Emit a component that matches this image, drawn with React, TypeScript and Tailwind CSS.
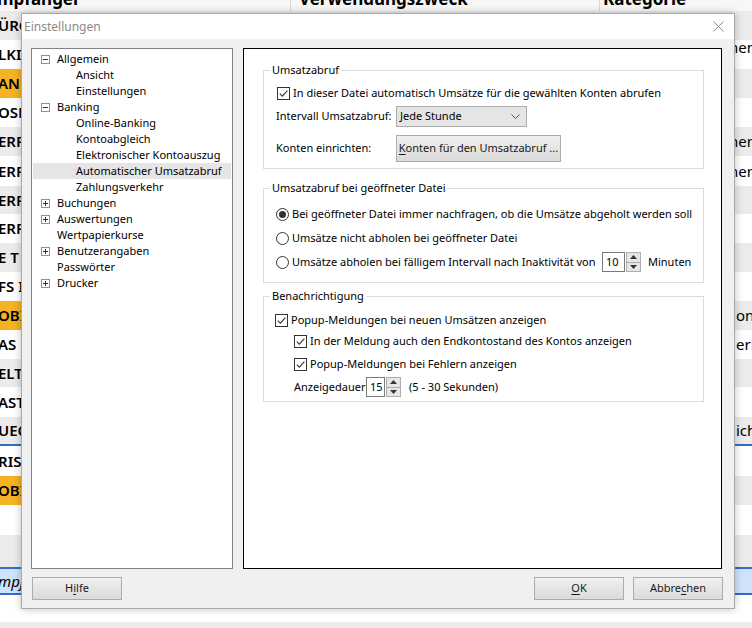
import React from "react";

const FONT = { fontFamily: '"Noto Sans", "Open Sans", sans-serif' };

type Row = { h: number; gray: boolean; orange?: boolean; left: string; right?: string; rightMl?: string; bottom?: string; rightShift?: string };

const rows: Row[] = [
  { h: 29, gray: true, left: "ÜRC" },
  { h: 29, gray: false, left: "LKI", right: "hen", rightMl: "ml-[0px]", rightShift: "mb-[14px]" },
  { h: 29, gray: true, orange: true, left: "AND" },
  { h: 29, gray: false, left: "OSM" },
  { h: 29, gray: true, left: "ERF", right: "hen", rightMl: "ml-[0px]" },
  { h: 30, gray: false, left: "ERF", right: "hen", rightMl: "ml-[0px]" },
  { h: 28, gray: true, left: "ERF" },
  { h: 29, gray: false, left: "ERF" },
  { h: 29, gray: true, left: "E T" },
  { h: 29, gray: false, left: "FS I" },
  { h: 29, gray: true, orange: true, left: "OBI", right: "on", rightMl: "ml-[7px]" },
  { h: 29, gray: false, left: "AS", right: "erl", rightMl: "ml-[7px]" },
  { h: 28, gray: true, left: "ELT" },
  { h: 30, gray: false, left: "AST" },
  { h: 29, gray: true, left: "UEC", right: "ich", rightMl: "ml-[7px]", bottom: "border-b-2 border-[#2f6fc4]" },
  { h: 30, gray: false, left: "RISI" },
  { h: 29, gray: true, orange: true, left: "OBI" },
  { h: 30, gray: false, left: "" },
  { h: 32, gray: true, left: "" },
];

function Check() {
  return (
    <span className="inline-flex w-[13px] h-[13px] border border-[#333333] bg-white items-center justify-center shrink-0">
      <svg width="11" height="11" viewBox="0 0 11 11">
        <path d="M1.8 5.6 L4.3 8.1 L9.4 2.6" fill="none" stroke="#333333" strokeWidth="1.1" />
      </svg>
    </span>
  );
}

function Radio({ on }: { on?: boolean }) {
  return (
    <span className="inline-flex w-[13px] h-[13px] rounded-full border border-[#333333] bg-white items-center justify-center shrink-0">
      {on ? <span className="w-[7px] h-[7px] rounded-full bg-[#333333]" /> : null}
    </span>
  );
}

function Spin({ value, w }: { value: string; w: string }) {
  return (
    <span className="inline-flex items-stretch h-[20px] shrink-0">
      <span className={`${w} border border-[#7a7a7a] bg-white flex items-center pl-[3px]`}>{value}</span>
      <span className="ml-[1px] w-[15px] border border-[#adadad] bg-[#e6e6e6] flex flex-col">
        <span className="flex-1 flex items-center justify-center border-b border-[#adadad]">
          <svg width="7" height="4" viewBox="0 0 7 4"><path d="M0 4 L3.5 0 L7 4 Z" fill="#333" /></svg>
        </span>
        <span className="flex-1 flex items-center justify-center">
          <svg width="7" height="4" viewBox="0 0 7 4"><path d="M0 0 L3.5 4 L7 0 Z" fill="#333" /></svg>
        </span>
      </span>
    </span>
  );
}

function Btn({ children, w = "w-[90px]", h = "h-[23px]" }: { children: React.ReactNode; w?: string; h?: string }) {
  return (
    <div
      className={`${w} ${h} shrink-0 border border-[#acacac] bg-gradient-to-b from-[#f0f0f0] to-[#dadada] flex items-center justify-center text-[11px] text-[#1a1a1a] whitespace-nowrap`}
    >
      {children}
    </div>
  );
}

function Box({ plus }: { plus?: boolean }) {
  return (
    <span className="w-[9px] h-[9px] border border-[#919191] bg-white shrink-0 flex items-center justify-center">
      <svg width="7" height="7" viewBox="0 0 7 7">
        <path d="M1 3.5 H6" stroke="#333" strokeWidth="1" />
        {plus ? <path d="M3.5 1 V6" stroke="#333" strokeWidth="1" /> : null}
      </svg>
    </span>
  );
}

type TreeItem = { label: string; level: 0 | 1; box?: "plus" | "minus"; sel?: boolean };
const tree: TreeItem[] = [
  { label: "Allgemein", level: 0, box: "minus" },
  { label: "Ansicht", level: 1 },
  { label: "Einstellungen", level: 1 },
  { label: "Banking", level: 0, box: "minus" },
  { label: "Online-Banking", level: 1 },
  { label: "Kontoabgleich", level: 1 },
  { label: "Elektronischer Kontoauszug", level: 1 },
  { label: "Automatischer Umsatzabruf", level: 1, sel: true },
  { label: "Zahlungsverkehr", level: 1 },
  { label: "Buchungen", level: 0, box: "plus" },
  { label: "Auswertungen", level: 0, box: "plus" },
  { label: "Wertpapierkurse", level: 0 },
  { label: "Benutzerangaben", level: 0, box: "plus" },
  { label: "Passwörter", level: 0 },
  { label: "Drucker", level: 0, box: "plus" },
];

export default function App() {
  return (
    <div className="relative w-[752px] h-[628px] overflow-hidden bg-white text-black" style={FONT}>
      {/* background table */}
      <div className="flex flex-col">
        <div className="h-[11px] overflow-hidden flex bg-[#f7f7f7]">
          <div className="w-[291px] border-r border-[#d6d6d6] overflow-hidden">
            <div className="mt-[-11px] ml-[-3px] text-[17px] font-bold leading-[20px] whitespace-nowrap">mpfänger</div>
          </div>
          <div className="w-[309px] border-r border-[#d6d6d6] overflow-hidden">
            <div className="mt-[-11px] ml-[8px] text-[17px] font-bold leading-[20px] whitespace-nowrap">Verwendungszweck</div>
          </div>
          <div className="flex-1 overflow-hidden">
            <div className="mt-[-11px] ml-[3px] text-[17px] font-bold leading-[20px] whitespace-nowrap">Kategorie</div>
          </div>
        </div>
        {rows.map((r, i) => (
          <div
            key={i}
            className={`flex items-stretch overflow-hidden ${r.gray ? "bg-[#ebebeb]" : "bg-white"} ${r.bottom ?? ""}`}
            style={{ height: r.h }}
          >
            <div className={`w-[291px] shrink-0 overflow-hidden flex items-center ${r.orange ? "bg-[#f5b324]" : ""}`}>
              <div className="ml-[-2px] text-[15px] font-semibold whitespace-nowrap">{r.left}</div>
            </div>
            <div className="w-[438px] shrink-0" />
            <div className="flex items-center">
              <div className={`${r.rightMl ?? ""} ${r.rightShift ?? ""} text-[15px] whitespace-nowrap`}>{r.right ?? ""}</div>
            </div>
          </div>
        ))}
        <div className="h-[28px] flex items-center bg-[#cfe3fb] border-y-2 border-[#2f6fc4]">
          <div className="ml-[-2px] text-[15px] italic whitespace-nowrap">mpj</div>
        </div>
      </div>
      <div className="absolute left-0 right-0 bottom-0 h-[6px] bg-[#ececec]" />

      {/* dialog window */}
      <div className="absolute left-[21px] top-[13px] w-[714px] h-[596px] border border-[#aaaaaa] bg-[#f0f0f0] flex flex-col shadow-[0_0_8px_rgba(0,0,0,0.25)] text-[11px] whitespace-nowrap">
        <div className="h-[25px] bg-white flex items-center justify-between pl-[2px] pr-[10px]">
          <span className="text-[12px] text-[#8a8a8a]">Einstellungen</span>
          <svg width="11" height="11" viewBox="0 0 11 11">
            <path d="M0.5 0.5 L10.5 10.5 M10.5 0.5 L0.5 10.5" stroke="#8a8a8a" strokeWidth="1" />
          </svg>
        </div>
        <div className="flex pl-[9px] pr-[12px] pt-[9px] gap-[10px]">
          {/* tree */}
          <div className="w-[202px] h-[521px] border border-[#828282] bg-white pt-[2px]">
            {tree.map((t, i) => (
              <div
                key={i}
                className={`h-[16px] flex items-center mx-[1px] ${t.sel ? "bg-[#e5e5e5]" : ""} ${
                  t.level === 1 ? "pl-[43px]" : t.box ? "pl-[8px]" : "pl-[24px]"
                }`}
              >
                {t.box ? <Box plus={t.box === "plus"} /> : null}
                <span className={t.box ? "ml-[7px]" : ""}>{t.label}</span>
              </div>
            ))}
          </div>
          {/* right panel */}
          <div className="w-[479px] h-[521px] border border-black bg-white pl-[19px] pt-[21px]">
            {/* group 1 */}
            <div className="relative w-[441px] h-[99px] border border-[#dcdcdc] pl-[12px] pt-[14px]">
              <span className="absolute left-[6px] top-[-9px] bg-white px-[2px] leading-[16px]">Umsatzabruf</span>
              <div className="h-[16px] flex items-center">
                <span className="ml-[1px] flex"><Check /></span>
                <span className="ml-[3px]">In dieser Datei automatisch Umsätze für die gewählten Konten abrufen</span>
              </div>
              <div className="mt-[5px] h-[21px] flex items-center">
                <span className="w-[120px]">Intervall Umsatzabruf:</span>
                <div className="w-[131px] h-[21px] border border-[#acacac] bg-[#e5e5e5] flex items-center justify-between pl-[3px] pr-[6px]">
                  <span>Jede Stunde</span>
                  <svg width="9" height="5" viewBox="0 0 9 5">
                    <path d="M0.5 0.5 L4.5 4.5 L8.5 0.5" fill="none" stroke="#555" strokeWidth="1" />
                  </svg>
                </div>
              </div>
              <div className="mt-[8px] h-[27px] flex items-center">
                <span className="w-[120px]">Konten einrichten:</span>
                <Btn w="w-[165px]" h="h-[27px]">
                  <span>
                    <span className="underline underline-offset-2">K</span>onten für den Umsatzabruf ...
                  </span>
                </Btn>
              </div>
            </div>
            {/* group 2 */}
            <div className="relative mt-[19px] w-[441px] h-[95px] border border-[#dcdcdc] pl-[12px] pt-[17px]">
              <span className="absolute left-[6px] top-[-9px] bg-white px-[2px] leading-[16px]">Umsatzabruf bei geöffneter Datei</span>
              <div className="h-[16px] flex items-center">
                <Radio on />
                <span className="ml-[3px]">Bei geöffneter Datei immer nachfragen, ob die Umsätze abgeholt werden soll</span>
              </div>
              <div className="mt-[8px] h-[16px] flex items-center">
                <Radio />
                <span className="ml-[3px]">Umsätze nicht abholen bei geöffneter Datei</span>
              </div>
              <div className="mt-[8px] h-[16px] flex items-center">
                <Radio />
                <span className="ml-[3px] w-[310px]">Umsätze abholen bei fälligem Intervall nach Inaktivität von</span>
                <Spin value="10" w="w-[23px]" />
                <span className="ml-[7px]">Minuten</span>
              </div>
            </div>
            {/* group 3 */}
            <div className="relative mt-[13px] w-[441px] h-[106px] border border-[#dcdcdc] pl-[11px] pt-[15px]">
              <span className="absolute left-[6px] top-[-9px] bg-white px-[2px] leading-[16px]">Benachrichtigung</span>
              <div className="h-[16px] flex items-center">
                <Check />
                <span className="ml-[3px]">Popup-Meldungen bei neuen Umsätzen anzeigen</span>
              </div>
              <div className="mt-[5px] h-[16px] flex items-center pl-[19px]">
                <Check />
                <span className="ml-[3px]">In der Meldung auch den Endkontostand des Kontos anzeigen</span>
              </div>
              <div className="mt-[7px] h-[16px] flex items-center pl-[19px]">
                <Check />
                <span className="ml-[3px]">Popup-Meldungen bei Fehlern anzeigen</span>
              </div>
              <div className="mt-[5px] h-[20px] flex items-center pl-[19px]">
                <span className="w-[72px]">Anzeigedauer</span>
                <Spin value="15" w="w-[19px]" />
                <span className="ml-[8px]">(5 - 30 Sekunden)</span>
              </div>
            </div>
          </div>
        </div>
        <div className="flex items-center mt-[8px] pl-[10px] pr-[11px]">
          <Btn>
            <span>
              H<span className="underline underline-offset-2">i</span>lfe
            </span>
          </Btn>
          <div className="flex-1" />
          <Btn>
            <span>
              <span className="underline underline-offset-2">O</span>K
            </span>
          </Btn>
          <div className="w-[9px]" />
          <Btn>
            <span>
              Abbre<span className="underline underline-offset-2">c</span>hen
            </span>
          </Btn>
        </div>
      </div>
    </div>
  );
}
